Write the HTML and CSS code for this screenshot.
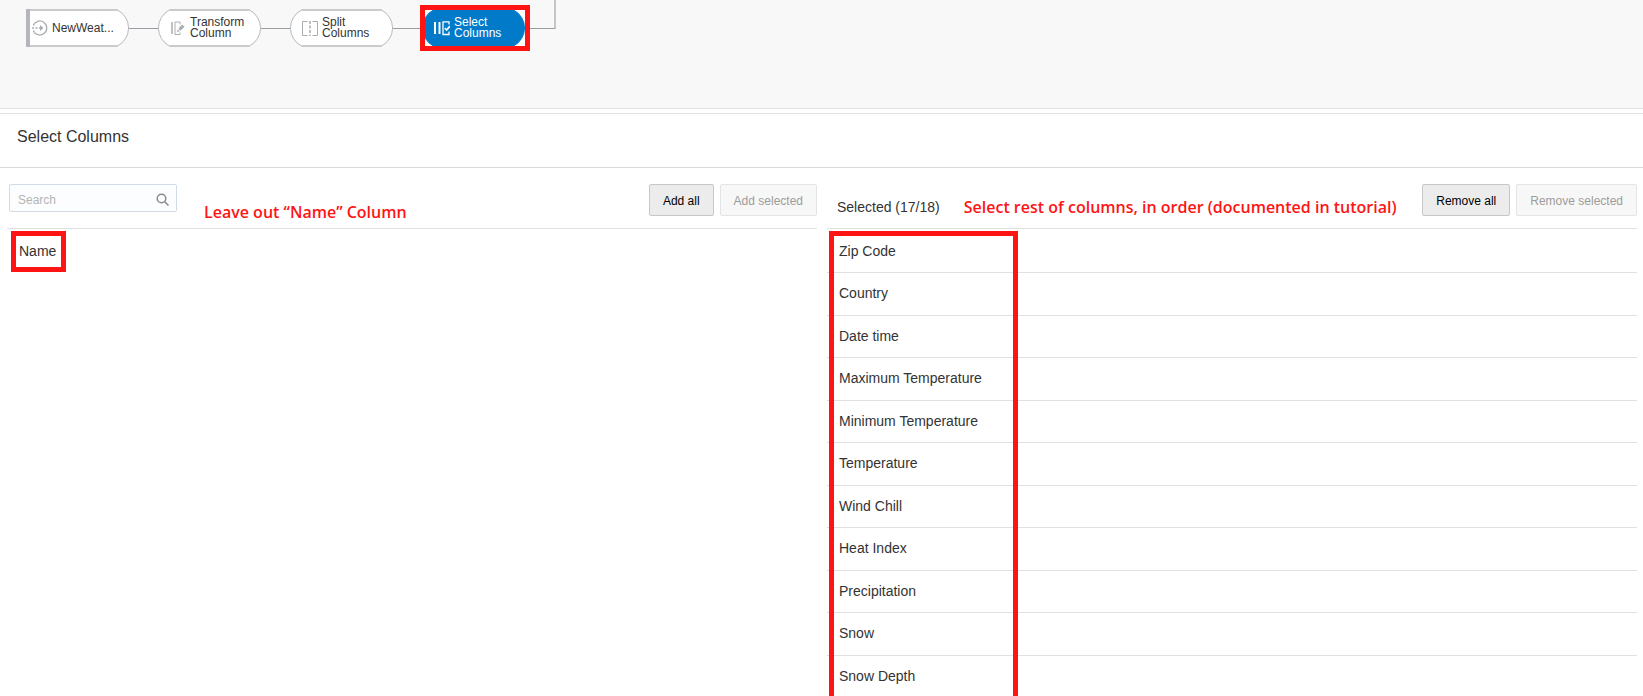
FILE: index.html
```html
<!DOCTYPE html>
<html lang="en">
<head>
<meta charset="utf-8">
<title>Select Columns</title>
<link rel="stylesheet" href="styles.css">
</head>
<body>
<section class="canvas" aria-label="Data flow">
  <div class="flow">
    <div class="node node-source">
      <svg class="shape" viewBox="0 0 103 38" aria-hidden="true"><path class="edge" d="M2 1H91.500A20.200 20.200 0 0 1 91.500 37H2Z"/><path class="flat" d="M2 1H91.500M2 37H91.500"/><path class="bar" d="M2 0V38"/></svg>
      <svg class="icon" viewBox="0 0 16 16" aria-hidden="true"><path d="M1.200 5.500A7 7 0 1 1 1.200 10.500" stroke-width="1.300"/><path d="M0 8H2M3.500 8H5.500M7 8H10" stroke-width="1.500"/><path class="solid" d="M8 5L11.500 8L8 11Z"/></svg>
      <span>NewWeat...</span>
    </div>
    <div class="link"></div>
    <div class="node">
      <svg class="shape" viewBox="0 0 103 38" aria-hidden="true"><path class="edge" d="M11.500 1H91.500A20.200 20.200 0 0 1 91.500 37H11.500A20.200 20.200 0 0 1 11.500 1Z"/><path class="flat" d="M11.500 1H91.500M11.500 37H91.500"/></svg>
      <svg class="icon" viewBox="0 0 16 16" aria-hidden="true"><path d="M2 2V14" stroke-width="1.500"/><path d="M10 4.500V2H5V14.500H10V12.500"/><path class="solid" d="M7 12L7.700 9.200L9.800 11.300ZM8.400 8.500L12.200 4.600L14.400 6.800L10.500 10.700Z"/></svg>
      <span>Transform<br>Column</span>
    </div>
    <div class="link"></div>
    <div class="node">
      <svg class="shape" viewBox="0 0 103 38" aria-hidden="true"><path class="edge" d="M11.500 1H91.500A20.200 20.200 0 0 1 91.500 37H11.500A20.200 20.200 0 0 1 11.500 1Z"/><path class="flat" d="M11.500 1H91.500M11.500 37H91.500"/></svg>
      <svg class="icon" viewBox="0 0 16 16" aria-hidden="true"><path d="M5.500 1.500H.5V15.500H5.500M10.500 1.500H15.500V15.500H10.500"/><path d="M8 1V16" stroke-width="1.500" stroke-dasharray="3 1.500"/></svg>
      <span>Split<br>Columns</span>
    </div>
    <div class="link"></div>
    <div class="node node-active">
      <svg class="shape" viewBox="0 0 103 38" aria-hidden="true"><path class="edge" d="M11.500 1H91.500A20.200 20.200 0 0 1 91.500 37H11.500A20.200 20.200 0 0 1 11.500 1Z"/></svg>
      <svg class="icon" viewBox="0 0 16 16" aria-hidden="true"><path d="M1 2V14M5.500 2V14" stroke-width="2"/><path d="M15 4.500V1.800H9V14.500H15V11.500" stroke-width="1.300"/><path d="M10.800 8L12.600 10L16 6" stroke-width="1.800"/></svg>
      <span>Select<br>Columns</span>
      <div class="mark mark-node"></div>
    </div>
    <div class="link link-up"></div>
  </div>
</section>
<main>
  <h1>Select Columns</h1>
  <div class="panels">
    <section class="panel">
      <div class="toolbar">
        <label class="search"><input type="search" placeholder="Search" aria-label="Search">
          <svg viewBox="0 0 14 14" aria-hidden="true"><circle cx="5.500" cy="5.500" r="4.300"/><path d="M8.700 8.700L12.500 12.500"/></svg></label>
        <p class="note note-left">Leave out “Name” Column</p>
        <div class="actions"><button>Add all</button><button disabled>Add selected</button></div>
      </div>
      <div class="list-wrap">
        <ul class="list list-available"><li>Name</li></ul>
        <div class="mark mark-name"></div>
      </div>
    </section>
    <section class="panel">
      <div class="toolbar">
        <h2>Selected (17/18)</h2>
        <p class="note note-right">Select rest of columns, in order (documented in tutorial)</p>
        <div class="actions"><button>Remove all</button><button disabled>Remove selected</button></div>
      </div>
      <div class="list-wrap">
        <ul class="list">
          <li>Zip Code</li>
          <li>Country</li>
          <li>Date time</li>
          <li>Maximum Temperature</li>
          <li>Minimum Temperature</li>
          <li>Temperature</li>
          <li>Wind Chill</li>
          <li>Heat Index</li>
          <li>Precipitation</li>
          <li>Snow</li>
          <li>Snow Depth</li>
        </ul>
        <div class="mark mark-list"></div>
      </div>
    </section>
  </div>
</main>
</body>
</html>
```
FILE: styles.css
```css
* { box-sizing: border-box; }

body {
  margin: 0;
  height: 100vh;
  overflow: hidden;
  background: #fff;
  color: #333;
  font: 14px/20px "Liberation Sans", Arial, sans-serif;
}

h1, h2, p, ul { margin: 0; padding: 0; font-weight: normal; }

/* Data flow */
.canvas {
  padding: 9px 26px 61px;
  background: #f8f8f8;
  border-bottom: 1px solid #e0e2e2;
}

.flow { display: flex; align-items: center; }

.node {
  position: relative;
  display: flex;
  flex: none;
  align-items: center;
  gap: 4px;
  width: 103px;
  height: 38px;
  padding-left: 12px;
  font-size: 12px;
  line-height: 11px;
}

.node-source { padding-left: 6px; }
.node span { position: relative; }

.shape { position: absolute; inset: 0; width: 100%; height: 100%; }
.edge { fill: #fff; stroke: #b5b9bc; }
.flat { fill: none; stroke: #c8cacb; stroke-width: 2; }
.bar { stroke: #b3b7bb; stroke-width: 4; }

.icon {
  position: relative;
  flex: none;
  width: 16px;
  height: 16px;
  fill: none;
  stroke: #a9adb1;
}

.icon .solid { fill: #a9adb1; stroke: none; }

.node-active { color: #fff; background: #fff; }
.node-active .edge { fill: #007ac9; stroke: #007ac9; }
.node-active .icon { stroke: #fff; }

.link { flex: none; width: 29px; height: 1px; background: #9a9ea3; }

.link-up {
  align-self: flex-start;
  width: 31px;
  height: 29px;
  margin-top: -9px;
  background: none;
  border-right: 2px solid #c4c6c9;
  border-bottom: 1px solid #9a9ea3;
}

/* Red highlights */
.mark { position: absolute; border: 5px solid #ff1414; }
.mark-node { inset: -4px -5px -4px -2px; }
.mark-name { left: 4px; top: 2px; width: 55px; height: 41px; }
.mark-list { left: 2px; top: 2px; width: 189px; bottom: -20px; }

.note {
  color: #ff1414;
  font: 600 16px/20px "Open Sans", "Noto Sans", sans-serif;
  white-space: nowrap;
}

/* Editor */
main { margin-top: 4px; border-top: 1px solid #e0e2e2; }

h1 {
  padding: 13px 17px 20px;
  border-bottom: 1px solid #d9dbdb;
  font-size: 16px;
}

.panels {
  display: grid;
  grid-template-columns: 1fr 1fr;
  gap: 10px;
  padding: 0 6px 0 7px;
}

.toolbar {
  display: flex;
  align-items: flex-start;
  height: 61px;
  padding-top: 16px;
  border-bottom: 1px solid #dfe1e1;
}

.search { position: relative; width: 168px; margin-left: 2px; }

.search input {
  display: block;
  width: 100%;
  height: 28px;
  padding: 4px 30px 0 8px;
  border: 1px solid #d3dce6;
  border-radius: 2px;
  background: #fcfdfe;
  font: 12px "Liberation Sans", Arial, sans-serif;
}

.search input::placeholder { color: #b4b4b4; opacity: 1; }

.search svg {
  position: absolute;
  right: 7px;
  top: 9px;
  width: 14px;
  height: 14px;
  fill: none;
  stroke: #8a8a8a;
  stroke-width: 1.5;
}

h2 { padding: 13px 0 0 10px; font-size: 14px; }
.note-left { padding: 18px 0 0 27px; }
.note-right { padding: 13px 0 0 24px; }

.actions { display: flex; gap: 6px; margin-left: auto; }

button {
  height: 32px;
  padding: 2px 13px 0;
  border: 1px solid #c6c8c8;
  border-radius: 2px;
  background: #ececec;
  color: #000;
  font: 12px "Liberation Sans", Arial, sans-serif;
  white-space: nowrap;
}

button:disabled { border-color: #e3e4e4; background: #f7f7f7; color: #9c9c9c; }

.list-wrap { position: relative; }
.list { list-style: none; }

.list li {
  display: flex;
  align-items: center;
  height: 42px;
  padding: 0 0 2px 12px;
  border-bottom: 1px solid #dfe1e1;
}

.list li:nth-child(even) { height: 43px; }
.list li:first-child { height: 44px; padding-bottom: 0; }
.list-available li { border-bottom: 0; }
```
